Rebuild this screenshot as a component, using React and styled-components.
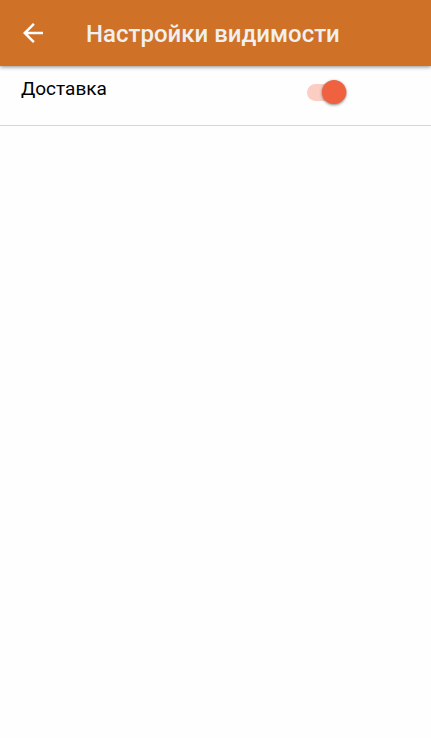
import React, { useState } from "react";
import styled, { createGlobalStyle } from "styled-components";

const GlobalStyle = createGlobalStyle`
  * { box-sizing: border-box; }
  body {
    margin: 0;
    background: #fefefe;
    color: #000000;
    font-family: Roboto, "Noto Sans", sans-serif;
  }
`;

const AppBar = styled.header`
  display: flex;
  align-items: center;
  gap: 36px;
  height: 66px;
  padding: 0 16px;
  background: #cf7127;
  box-shadow: 0 1px 4px rgba(0, 0, 0, 0.45);
  position: relative;
`;

const BackButton = styled.button`
  display: flex;
  align-items: center;
  justify-content: center;
  width: 34px;
  height: 34px;
  padding: 0;
  border: 0;
  background: none;
  color: #ffffff;
  cursor: pointer;
`;

const Title = styled.h1`
  margin: 0;
  padding-top: 2px;
  color: #f0f0f0;
  font-size: 24px;
  font-weight: 500;
  line-height: 32px;
  white-space: nowrap;
`;

const SettingRow = styled.label`
  display: grid;
  grid-template-columns: 1fr 124px;
  align-items: start;
  height: 60px;
  padding: 9px 0 0 21px;
  border-bottom: 1px solid #d6d6d6;
  font-size: 19px;
  line-height: 28px;
  cursor: pointer;
`;

const Switch = styled.input`
  appearance: none;
  display: flex;
  align-items: flex-start;
  width: 40px;
  height: 17px;
  margin: 9px 0 0;
  border-radius: 9px;
  background: ${(p) => (p.checked ? "#fccdc2" : "#c4c4c4")};
  cursor: pointer;

  &::before {
    content: "";
    width: 24px;
    height: 24px;
    flex: none;
    margin: -4px 0 0 ${(p) => (p.checked ? "15px" : "0")};
    border-radius: 50%;
    background: ${(p) => (p.checked ? "#ef613f" : "#f1f1f1")};
    box-shadow: 0 1px 3px rgba(0, 0, 0, 0.5);
  }
`;

function BackArrow() {
  return (
    <svg width="30" height="30" viewBox="0 0 24 24" fill="currentColor" aria-hidden="true">
      <path d="M20 11H7.83l5.59-5.59L12 4l-8 8 8 8 1.41-1.41L7.83 13H20v-2z" />
    </svg>
  );
}

export default function App() {
  const [delivery, setDelivery] = useState(true);
  return (
    <>
      <GlobalStyle />
      <AppBar>
        <BackButton type="button" aria-label="Назад">
          <BackArrow />
        </BackButton>
        <Title>Настройки видимости</Title>
      </AppBar>
      <main>
        <SettingRow>
          <span>Доставка</span>
          <Switch
            type="checkbox"
            role="switch"
            checked={delivery}
            onChange={(e) => setDelivery(e.target.checked)}
          />
        </SettingRow>
      </main>
    </>
  );
}
